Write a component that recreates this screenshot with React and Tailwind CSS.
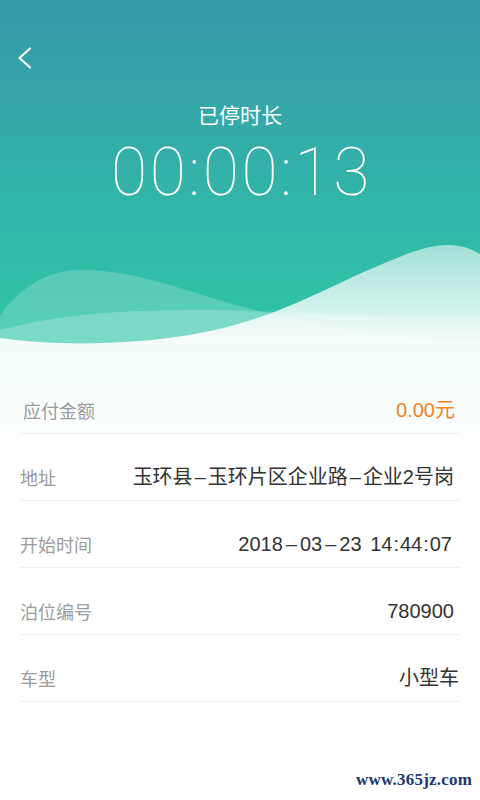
import React from "react";

const CJK = "'Noto Sans CJK SC', sans-serif";
const MIX = "'Liberation Sans', 'Noto Sans CJK SC', sans-serif";

function Waves() {
  return (
    <svg
      className="absolute bottom-0 left-0 w-full h-[115px]"
      viewBox="0 0 480 115"
      preserveAspectRatio="none"
    >
      <defs>
        <linearGradient id="front" x1="0" y1="0" x2="0" y2="1">
          <stop offset="0" stopColor="#ffffff" stopOpacity="0.55" />
          <stop offset="0.7" stopColor="#ffffff" stopOpacity="0.82" />
          <stop offset="1" stopColor="#ffffff" stopOpacity="0.93" />
        </linearGradient>
      </defs>
      <path
        d="M0,86 C18,58 48,40 80,40 C150,40 200,70 290,88 C360,102 420,110 480,113 L480,115 L0,115 Z"
        fill="#ffffff"
        fillOpacity="0.2"
      />
      <path
        d="M0,100 C60,84 120,80 200,80 C300,80 380,92 480,88 L480,115 L0,115 Z"
        fill="#ffffff"
        fillOpacity="0.22"
      />
      <path
        d="M0,108 C40,114 120,118 200,103 C280,88 330,55 380,35 C420,18 450,6 480,24 L480,115 L0,115 Z"
        fill="url(#front)"
      />
    </svg>
  );
}

function Row({ label, value, pr = "pr-[5px]", valueClass = "text-[#333333]" }) {
  return (
    <div className="mx-[20px] h-[67px] border-b border-[#f0f0f0] flex items-end justify-between pb-[11px]">
      <span className="text-[18px] leading-[24px] text-[#9b9b9b]" style={{ fontFamily: CJK }}>
        {label}
      </span>
      <span className={`text-[20px] leading-[24px] whitespace-nowrap ${valueClass} ${pr}`} style={{ fontFamily: MIX }}>
        {value}
      </span>
    </div>
  );
}

export default function App() {
  return (
    <div className="relative w-[480px] h-[800px] overflow-hidden bg-white">
      <div className="relative h-[345px] bg-gradient-to-b from-[#3698a9] via-[#33b1a8] to-[#2ec6a6] flex flex-col">
        <div className="pt-[47px] pl-[17px]">
          <svg width="15" height="22" viewBox="0 0 15 22" fill="none">
            <polyline
              points="13,1.5 2.5,11 13,20.5"
              stroke="#ffffff"
              strokeWidth="2.2"
              strokeLinecap="round"
              strokeLinejoin="round"
            />
          </svg>
        </div>
        <div
          className="mt-[31px] text-center text-white text-[21px] leading-[28px]"
          style={{ fontFamily: CJK }}
        >
          已停时长
        </div>
        <div
          className="mt-[12px] pl-[3px] text-center text-white text-[66px] leading-none font-thin tracking-[2.6px]"
          style={{ fontFamily: "Roboto, 'Liberation Sans', sans-serif" }}
        >
          00:00:13
        </div>
        <Waves />
      </div>

      <div className="bg-gradient-to-b from-[#f0fbf8] to-[#fbfefd]">
        <div className="mx-[20px] h-[89px] border-b border-[#f0f0f0] flex items-end justify-between pb-[11px]">
          <span className="pl-[3px] text-[18px] leading-[24px] text-[#9b9b9b]" style={{ fontFamily: CJK }}>
            应付金额
          </span>
          <span className="pr-[5px] text-[20px] leading-[24px] text-[#f3821e]" style={{ fontFamily: MIX }}>
            0.00元
          </span>
        </div>
      </div>

      <Row
        label="地址"
        value={
          <>
            玉环县<span className="mx-[2px]">–</span>玉环片区企业路<span className="mx-[2px]">–</span>企业2号岗
          </>
        }
        pr="pr-[6px]"
      />
      <Row
        label="开始时间"
        value={
          <>
            2018<span className="mx-[3px]">–</span>03<span className="mx-[3px]">–</span>23
            <span className="ml-[3px]"> </span>14<span className="mx-[1px]">:</span>44
            <span className="mx-[1px]">:</span>07
          </>
        }
        pr="pr-[8px]"
      />
      <Row label="泊位编号" value="780900" pr="pr-[6px]" />
      <Row label="车型" value="小型车" pr="pr-[1px]" />

      <div
        className="absolute right-[8px] bottom-[8px] text-[17px] font-bold text-[#1d3670] tracking-[0.2px]"
        style={{ fontFamily: "'Liberation Serif', serif" }}
      >
        www.365jz.com
      </div>
    </div>
  );
}
